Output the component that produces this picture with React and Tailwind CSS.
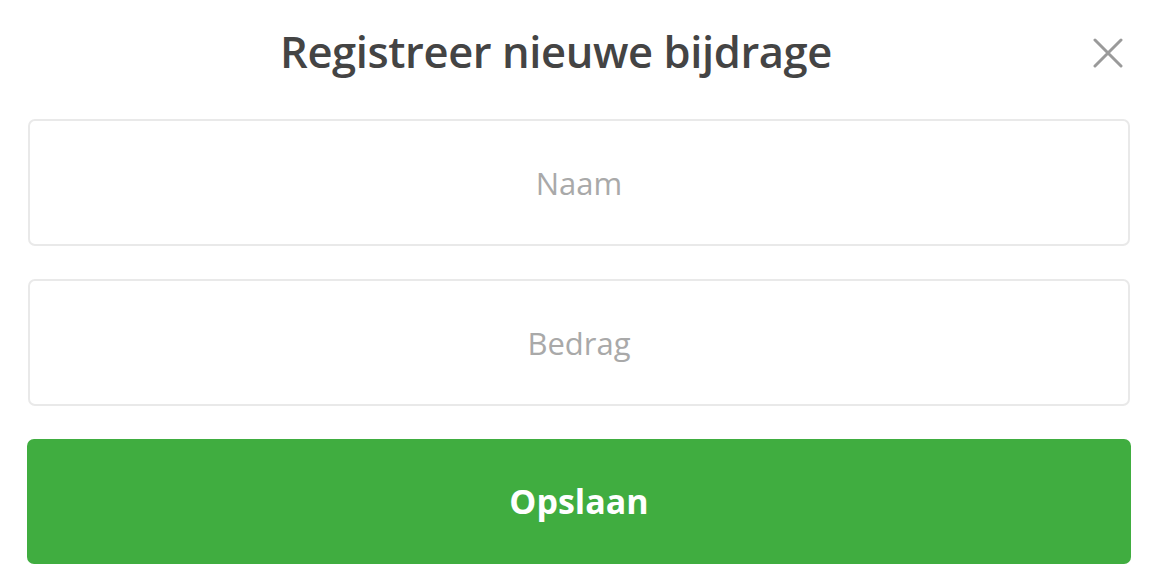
import React from "react";

export default function App() {
  return (
    <div
      className="w-[1154px] h-[576px] bg-white pl-[27px] pr-[23px]"
      style={{ fontFamily: "'Open Sans', 'Noto Sans', sans-serif" }}
    >
      {/* header */}
      <div className="flex items-center h-[106px]">
        <h1 className="flex-1 text-center text-[43.5px] font-semibold text-[#444444] tracking-[-0.4px] leading-none -mt-[3px]">
          Registreer nieuwe bijdrage
        </h1>
        <button className="w-[46px] h-[46px] flex items-center justify-center -mt-[1px]">
          <svg width="30" height="30" viewBox="0 0 30 30">
            <path
              d="M2 2 L28 28 M28 2 L2 28"
              stroke="#9a9a9a"
              strokeWidth="3"
              strokeLinecap="round"
            />
          </svg>
        </button>
      </div>

      <div className="flex flex-col gap-[33px] pt-[13px] px-[1px]">
        <input
          placeholder="Naam"
          className="h-[127px] w-full rounded-[7px] border-2 border-[#e9e9e9] text-center text-[31px] text-[#444] placeholder:text-[#a9a9a9] outline-none"
        />
        <input
          placeholder="Bedrag"
          className="h-[127px] w-full rounded-[7px] border-2 border-[#e9e9e9] text-center text-[31px] text-[#444] placeholder:text-[#a9a9a9] outline-none"
        />
      </div>

      <button className="mt-[33px] h-[125px] w-full rounded-[7px] bg-[#40ad40] text-white text-[34px] font-bold">
        Opslaan
      </button>
    </div>
  );
}
